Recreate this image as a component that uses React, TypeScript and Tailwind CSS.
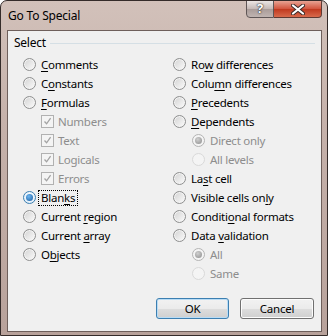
import React from 'react';

type Kind = 'off' | 'on' | 'disOn' | 'disOff';

function Radio({ kind }: { kind: Kind }) {
  if (kind === 'on') {
    return (
      <span className="w-[13px] h-[13px] shrink-0 rounded-full border border-[#3c7fb1] bg-[radial-gradient(circle_at_50%_40%,#ffffff,#d6e9f8)] flex items-center justify-center">
        <span className="w-[7px] h-[7px] rounded-full bg-[radial-gradient(circle_at_40%_35%,#6cb6f2,#1c5d9e)]" />
      </span>
    );
  }
  if (kind === 'disOn') {
    return (
      <span className="w-[13px] h-[13px] shrink-0 rounded-full border border-[#b4b4b4] bg-[#f4f4f4] flex items-center justify-center">
        <span className="w-[7px] h-[7px] rounded-full bg-[radial-gradient(circle_at_40%_35%,#cfcfcf,#8d8d8d)]" />
      </span>
    );
  }
  if (kind === 'disOff') {
    return <span className="w-[13px] h-[13px] shrink-0 rounded-full border border-[#d9d9d9] bg-[#f4f4f4]" />;
  }
  return (
    <span className="w-[13px] h-[13px] shrink-0 rounded-full border border-[#8e8f8f] bg-[linear-gradient(135deg,#d2d2d2,#fcfcfc)] shadow-[inset_0_0_0_1px_#f4f4f4]" />
  );
}

function Check() {
  return (
    <span className="w-[13px] h-[13px] shrink-0 border border-[#b1b1b1] bg-[#f4f4f4] flex items-center justify-center">
      <svg width="9" height="9" viewBox="0 0 9 9">
        <path d="M1.5 4.5 L3.6 6.8 L7.6 1.2" fill="none" stroke="#a3a3a3" strokeWidth="1.3" />
      </svg>
    </span>
  );
}

function Label({ text, u, dim }: { text: string; u?: number; dim?: boolean }) {
  const cls = dim ? 'text-[#8d8d8d]' : 'text-black';
  if (u === undefined) return <span className={cls}>{text}</span>;
  return (
    <span className={cls}>
      {text.slice(0, u)}
      <span className="underline underline-offset-2">{text[u]}</span>
      {text.slice(u + 1)}
    </span>
  );
}

function RadioRow({ text, u, kind = 'off', indent, dim, focus }: { text: string; u?: number; kind?: Kind; indent?: boolean; dim?: boolean; focus?: boolean }) {
  return (
    <div className={`h-[19px] flex items-center gap-[4px] ${indent ? 'pl-[19px]' : ''}`}>
      <Radio kind={kind} />
      <span className={`px-[1px] leading-[12px] ${focus ? 'outline outline-1 outline-dotted outline-black outline-offset-[1px]' : ''}`}>
        <Label text={text} u={u} dim={dim} />
      </span>
    </div>
  );
}

function CheckRow({ text }: { text: string }) {
  return (
    <div className="h-[19px] flex items-center gap-[4px] pl-[18px]">
      <Check />
      <Label text={text} dim />
    </div>
  );
}

export default function App() {
  return (
    <div className="w-[328px] h-[336px] flex flex-col border border-[#352c2a] rounded-t-[7px] bg-[linear-gradient(180deg,#d2c1ba_0%,#c6b2ab_35%,#b8a29b_100%)] font-['Noto_Sans',sans-serif] text-[11.5px] tracking-[-0.25px] overflow-hidden">
      {/* title bar */}
      <div className="h-[29px] flex items-start justify-between pl-[7px] pr-[5px] shrink-0">
        <span className="pt-[6px] text-black text-[12px] tracking-[-0.2px]">Go To Special</span>
        <div className="flex -mt-[1px]">
          <div className="w-[28px] h-[18px] rounded-bl-[4px] border border-[#5f5656] bg-[linear-gradient(180deg,#ece6e4,#c4b8b5_50%,#a99c99_51%,#c0b4b1)] flex items-center justify-center text-white font-bold text-[13px] [text-shadow:0_0_2px_#333,0_0_1px_#000]">
            ?
          </div>
          <div className="w-[48px] h-[18px] rounded-br-[4px] border border-l-0 border-[#5f3a33] bg-[linear-gradient(180deg,#e8a393,#d2533c_50%,#c0391f_51%,#d86a4c)] flex items-center justify-center">
            <svg width="14" height="11" viewBox="0 0 14 11">
              <path d="M2 1.5 L12 9.5 M12 1.5 L2 9.5" stroke="#3a2a28" strokeWidth="4" strokeLinecap="round" />
              <path d="M2 1.5 L12 9.5 M12 1.5 L2 9.5" stroke="#ffffff" strokeWidth="2.2" strokeLinecap="round" />
            </svg>
          </div>
        </div>
      </div>

      {/* client area */}
      <div className="ml-[6px] mr-[5px] mb-[3px] flex-1 border border-[#6e5f5b] bg-[#f0f0f0] flex flex-col">
        <div className="flex items-center pl-[6px] pr-[6px] pt-[4px] h-[20px] gap-[4px]">
          <span className="text-black leading-[16px] text-[12px]">Select</span>
          <span className="flex-1 h-[1px] bg-[#d5dfe5]" />
        </div>

        <div className="flex mt-[4px]">
          <div className="w-[165px] pl-[15px] flex flex-col">
            <RadioRow text="Comments" u={0} />
            <RadioRow text="Constants" u={1} />
            <RadioRow text="Formulas" u={0} />
            <CheckRow text="Numbers" />
            <CheckRow text="Text" />
            <CheckRow text="Logicals" />
            <CheckRow text="Errors" />
            <RadioRow text="Blanks" u={4} kind="on" focus />
            <RadioRow text="Current region" u={8} />
            <RadioRow text="Current array" u={8} />
            <RadioRow text="Objects" u={1} />
          </div>
          <div className="flex flex-col">
            <RadioRow text="Row differences" u={2} />
            <RadioRow text="Column differences" u={4} />
            <RadioRow text="Precedents" u={0} />
            <RadioRow text="Dependents" u={0} />
            <RadioRow text="Direct only" kind="disOn" indent dim />
            <RadioRow text="All levels" kind="disOff" indent dim />
            <RadioRow text="Last cell" u={2} />
            <RadioRow text="Visible cells only" u={16} />
            <RadioRow text="Conditional formats" u={7} />
            <RadioRow text="Data validation" u={5} />
            <RadioRow text="All" kind="disOn" indent dim />
            <RadioRow text="Same" kind="disOff" indent dim />
          </div>
        </div>

        <div className="flex justify-end gap-[11px] pr-[7px] mt-[15px]">
          <button className="w-[73px] h-[21px] rounded-[3px] border border-[#3c7fb1] bg-[linear-gradient(180deg,#f2f2f2_0%,#ebebeb_50%,#dddddd_51%,#cfcfcf_100%)] shadow-[inset_0_0_0_1px_#b9dcf5] text-black leading-none">
            OK
          </button>
          <button className="w-[74px] h-[21px] rounded-[3px] border border-[#707070] bg-[linear-gradient(180deg,#f2f2f2_0%,#ebebeb_50%,#dddddd_51%,#cfcfcf_100%)] shadow-[inset_0_0_0_1px_#fcfcfc] text-black leading-none">
            Cancel
          </button>
        </div>
      </div>
    </div>
  );
}
